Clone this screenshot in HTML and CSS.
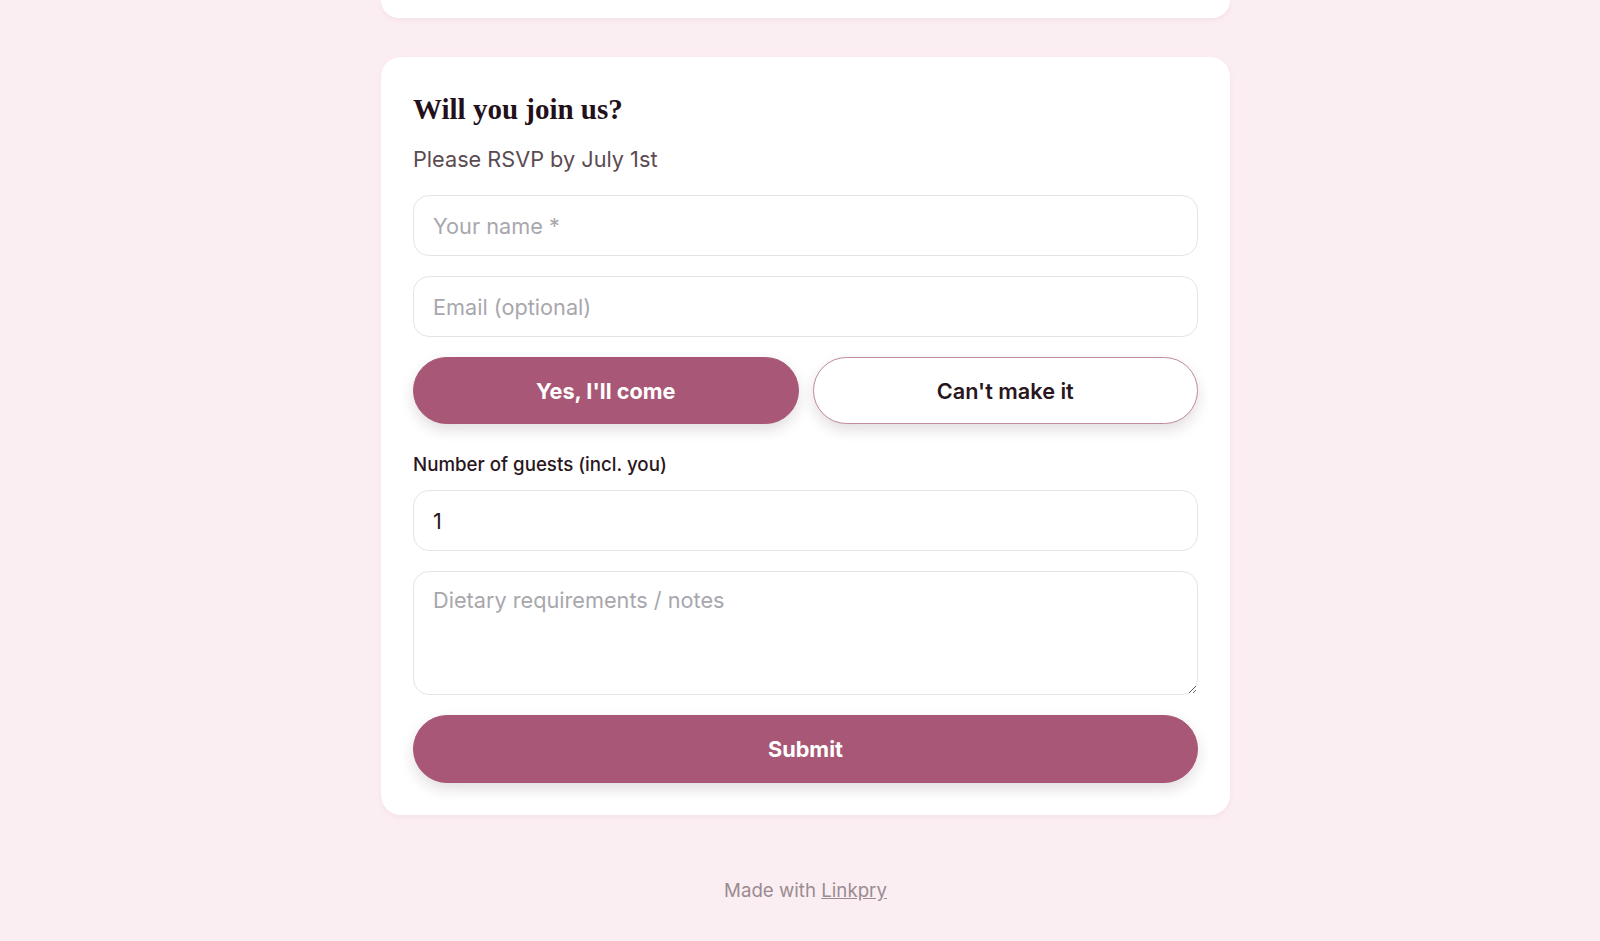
FILE: index.html
```html
<!DOCTYPE html>
<html lang="en">
<head>
    <meta charset="UTF-8">
    <title>RSVP</title>
    <link rel="stylesheet" href="styles.css">
</head>
<body>
    <div class="page">
        <div class="card card-prev"></div>

        <div class="card rsvp">
            <h2 class="rsvp-title">Will you join us?</h2>
            <p class="rsvp-sub">Please RSVP by July 1st</p>

            <form class="rsvp-form">
                <input class="field" type="text" placeholder="Your name *">
                <input class="field" type="email" placeholder="Email (optional)">

                <div class="choice">
                    <button type="button" class="btn btn-fill">Yes, I'll come</button>
                    <button type="button" class="btn btn-outline">Can't make it</button>
                </div>

                <div class="guests">
                    <label class="field-label" for="guests">Number of guests (incl. you)</label>
                    <input class="field" id="guests" type="number" value="1">
                </div>

                <textarea class="field field-notes" placeholder="Dietary requirements / notes"></textarea>

                <button type="button" class="btn btn-fill btn-submit">Submit</button>
            </form>
        </div>

        <div class="footer">
            Made with <a href="#">Linkpry</a>
        </div>
    </div>
</body>
</html>
```

FILE: styles.css
```css
:root {
    --bg: #fbeef2;
    --accent: #a85876;
    --text: #2a161d;
    --muted: #5b4b52;
    --border: #e9e2e5;
    --placeholder: #a8a7ad;
}

* {
    margin: 0;
    padding: 0;
    box-sizing: border-box;
}

body {
    font-family: Inter, 'Noto Sans', sans-serif;
    background-color: var(--bg);
    color: var(--text);
}

.page {
    display: flex;
    flex-direction: column;
    align-items: center;
    padding-left: 11px;
}

.card {
    width: 849px;
    background: #fff;
    border-radius: 20px;
    box-shadow: 0 2px 6px rgba(160, 90, 110, 0.08);
}

.card-prev {
    height: 18px;
    border-radius: 0 0 20px 20px;
    margin-bottom: 39px;
}

.rsvp {
    padding: 32px 32px 32px;
}

.rsvp-title {
    font-family: 'Liberation Serif', 'DejaVu Serif', serif;
    font-weight: 700;
    font-size: 29px;
    line-height: 40px;
    color: #24101a;
}

.rsvp-sub {
    font-size: 21.7px;
    line-height: 28px;
    color: var(--muted);
    margin-top: 16px;
    margin-bottom: 22px;
}

.rsvp-form {
    display: flex;
    flex-direction: column;
    gap: 20px;
}

.field {
    display: block;
    width: 100%;
    height: 61px;
    padding: 0 19px;
    border: 1px solid var(--border);
    border-radius: 16px;
    background: #fff;
    font-family: Inter, 'Noto Sans', sans-serif;
    font-size: 21.7px;
    color: var(--text);
    outline: none;
}

.field::placeholder {
    color: var(--placeholder);
}

.field[type=number] {
    -moz-appearance: textfield;
}

.field::-webkit-inner-spin-button,
.field::-webkit-outer-spin-button {
    -webkit-appearance: none;
    margin: 0;
}

.field-notes {
    height: 124px;
    padding: 15px 19px;
    line-height: 26px;
    resize: vertical;
}

.choice {
    display: grid;
    grid-template-columns: 1fr 1fr;
    gap: 14px;
}

.btn {
    height: 67px;
    border-radius: 34px;
    font-family: Inter, 'Noto Sans', sans-serif;
    font-size: 21.7px;
    font-weight: 700;
    cursor: pointer;
    box-shadow: 0 6px 14px rgba(60, 20, 35, 0.14);
}

.btn-fill {
    background: var(--accent);
    border: 1px solid var(--accent);
    color: #fff;
}

.btn-outline {
    background: #fff;
    border: 1px solid #c08aa0;
    color: var(--text);
    font-weight: 600;
}

.btn-submit {
    height: 68px;
}

.guests {
    margin-top: 8px;
}

.field-label {
    display: block;
    font-size: 18.7px;
    font-weight: 500;
    line-height: 24px;
    color: var(--text);
    margin-top: 1px;
    margin-bottom: 13px;
}

.footer {
    margin-top: 64px;
    font-size: 18.7px;
    color: #9a8b91;
}

.footer a {
    color: #9a8b91;
}
```
